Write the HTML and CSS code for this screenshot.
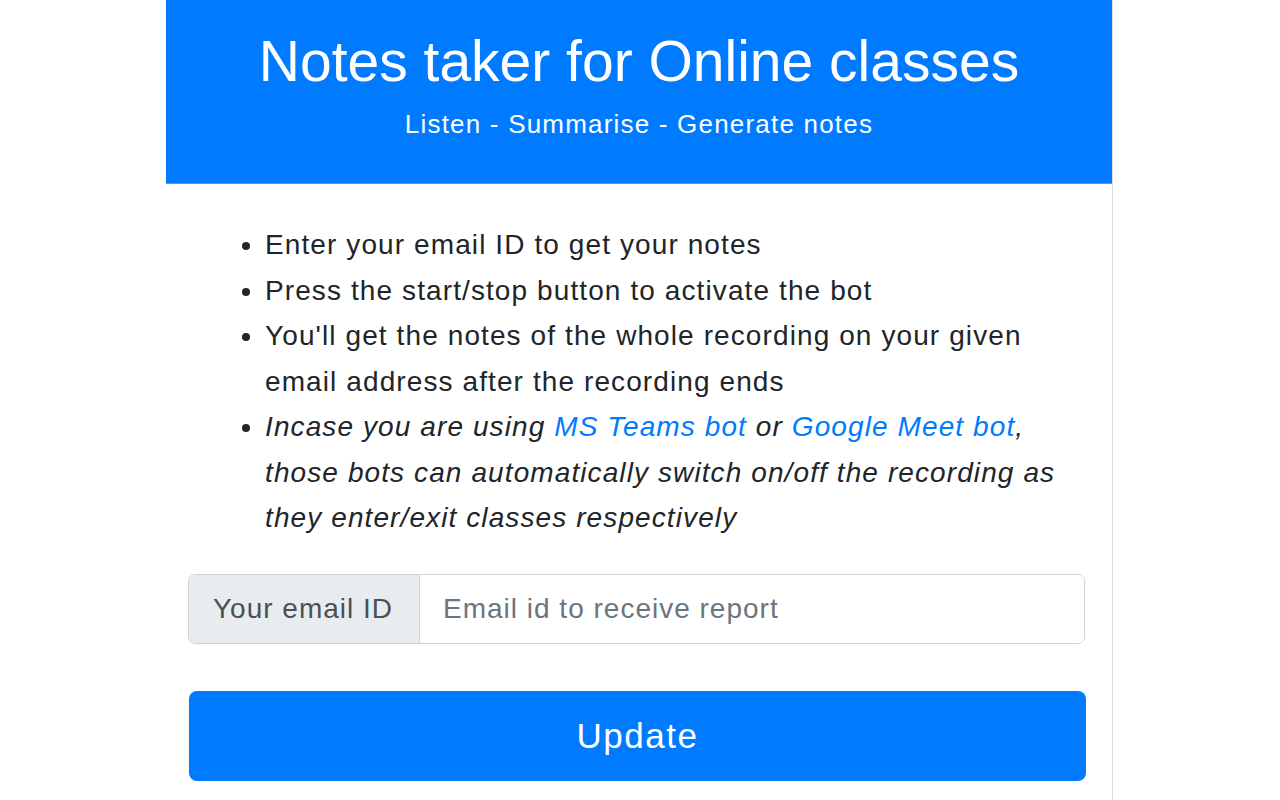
FILE: index.html
```html
<!DOCTYPE html>
<html lang="en">
<head>
  <meta charset="UTF-8">
  <meta name="viewport" content="width=device-width, initial-scale=1.0">
  <title>Notes taker for Online classes</title>
  <link rel="stylesheet" href="styles.css">
</head>
<body>

  <div class="popup">
    <div class="header">
      <h1>Notes taker for Online classes</h1>
      <p>Listen - Summarise - Generate notes</p>
    </div>

    <div class="content">
      <ul class="steps">
        <li>Enter your email ID to get your notes</li>
        <li>Press the start/stop button to activate the bot</li>
        <li>You'll get the notes of the whole recording on your given email address after the recording ends</li>
        <li><i>Incase you are using <a href="#">MS Teams bot</a> or <a href="#">Google Meet bot</a>, those bots can automatically switch on/off the recording as they enter/exit classes respectively</i></li>
      </ul>

      <div class="input-group">
        <span class="input-label">Your email ID</span>
        <input type="email" id="email" placeholder="Email id to receive report">
      </div>

      <button id="update-btn">Update</button>
    </div>
  </div>

</body>
</html>
```

FILE: styles.css
```css
body {
  font-family: "Liberation Sans", Arial, sans-serif;
  margin: 0;
  padding: 0;
  color: #212529;
  background: #ffffff;
}

.popup {
  margin-left: 166px;
  width: 946px;
  height: 800px;
  border-right: 1px solid #dcdcdc;
}

.header {
  background: #007bff;
  color: #ffffff;
  text-align: center;
  height: 184px;
  box-sizing: border-box;
  padding-top: 28px;
  border-bottom: 1px solid #4a9dff;
}
.header h1 {
  font-size: 57px;
  font-weight: normal;
  margin: 0;
  line-height: 66px;
}
.header p {
  font-size: 26px;
  letter-spacing: 1.2px;
  margin: 0;
  line-height: 30px;
  margin-top: 15px;
}

.content {
  padding: 0 27px 0 22px;
}

.steps {
  margin: 38px 0 33px 0;
  padding-left: 77px;
  font-size: 28px;
  letter-spacing: 1.1px;
  line-height: 45.5px;
}
.steps li::marker {
  letter-spacing: 0;
}
.steps a {
  color: #007bff;
  text-decoration: none;
}

.input-group {
  display: flex;
  height: 70px;
  border: 1px solid #ced4da;
  border-radius: 7px;
  overflow: hidden;
  box-sizing: border-box;
}
.input-label {
  display: flex;
  align-items: center;
  padding: 0 24px;
  width: 231px;
  box-sizing: border-box;
  background: #e9ecef;
  border-right: 1px solid #ced4da;
  color: #495057;
  font-size: 28px;
  letter-spacing: 1px;
}
.input-group input {
  flex: 1;
  border: none;
  outline: none;
  padding: 0 23px;
  font-family: "Liberation Sans", Arial, sans-serif;
  font-size: 28px;
  letter-spacing: 1px;
  color: #495057;
}
.input-group input::placeholder {
  color: #6c757d;
}

#update-btn {
  display: block;
  width: 100%;
  height: 90px;
  margin-top: 47px;
  margin-left: 1px;
  border: none;
  border-radius: 8px;
  background: #007bff;
  color: #ffffff;
  font-family: "Liberation Sans", Arial, sans-serif;
  font-size: 35px;
  letter-spacing: 1.5px;
  cursor: pointer;
}
```
